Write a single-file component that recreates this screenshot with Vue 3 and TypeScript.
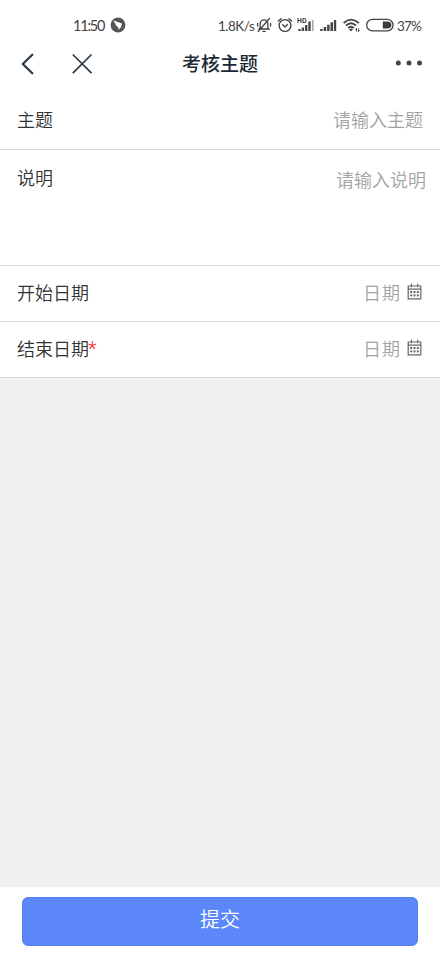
<script setup lang="ts">
import { ref } from 'vue'

interface DateField {
  label: string
  required: boolean
}

const title = ref('考核主题')
const dateFields: DateField[] = [
  { label: '开始日期', required: false },
  { label: '结束日期', required: true },
]
const calendarDots: number[] = [4.2, 7.5, 10.8]
</script>

<template>
  <div class="page">
    <div class="status">
      <span class="time">11:50</span>
      <svg class="bird" width="16" height="16" viewBox="0 0 16 16">
        <circle cx="8" cy="8" r="7.4" fill="#555" />
        <path d="M3.6 3.6 L11.9 6.4 Q12.2 7.5 10.8 9.4 L11.6 9.6 L8.4 13 L8.7 10.8 L7.2 10.5 L8 9.6 Q5.6 8.9 5.2 7.4 L6.4 7.4 Q4.1 6 3.6 3.6Z" fill="#fff" />
      </svg>
      <span class="speed">1.8K/s</span>
      <svg class="bell" width="16" height="16" viewBox="0 0 16 16" fill="none" stroke="#444" stroke-width="1.3" stroke-linecap="round">
        <path d="M3 12 H13 L11.8 10.3 V6.7 C11.8 4.3 10.3 2.8 8 2.8 C5.7 2.8 4.2 4.3 4.2 6.7 V10.3 L3 12 M6.8 14.3 H9.2 M13.5 1.5 L2.2 14.5 M1.6 6.5 V9 M14.6 6.5 V9" />
      </svg>
      <svg class="alarm" width="16" height="16" viewBox="0 0 16 16" fill="none" stroke="#444" stroke-width="1.4" stroke-linecap="round" stroke-linejoin="round">
        <circle cx="8" cy="8.5" r="5.9" />
        <path d="M5.7 7.8 L8 9.9 L10.5 7.5 M1.3 4 L4 1.7 M14.7 4 L12 1.7" />
      </svg>
      <svg class="hd" width="18" height="16" viewBox="0 0 18 16" fill="#444">
        <path d="M1 1 V6 M4 1 V6 M1 3.5 H4 M6 1.5 V5.5 H7.5 Q9 5.5 9 3.5 Q9 1.5 7.5 1.5 H6" fill="none" stroke="#444" stroke-width="1.1" />
        <path d="M1.3 12 h2.4 v2 h-2.4z M4.7 10.4 h2.4 v3.6 h-2.4z M8 8 h2.4 v6 h-2.4z M11.3 4.5 h2.4 v9.5 h-2.4z" />
        <path d="M15 3 h1.6 v11 h-1.6z" fill="#aaa" />
      </svg>
      <svg class="signal" width="17" height="16" viewBox="0 0 17 16" fill="#444">
        <path d="M0.2 12 h2.5 v2 h-2.5z M3.7 10 h2.5 v4 h-2.5z M7.1 7.7 h2.5 v6.3 h-2.5z M10.5 5.3 h2.5 v8.7 h-2.5z M13.9 3 h2.3 v11 h-2.3z" />
      </svg>
      <svg class="wifi" width="18" height="16" viewBox="0 0 18 16" fill="none" stroke="#444" stroke-width="1.8">
        <path d="M0.6 6 Q8 -0.8 15.8 6 M3 8.5 Q8 4 13 8.5 M5.2 11 Q8 8.5 10.8 11" />
        <path d="M8 14.4 L6 12.2 Q8 10.8 10 12.2Z" fill="#444" stroke="none" />
        <path d="M13.5 14.5 V11.5 M12.6 12.5 L13.5 11.4 M15.6 11.5 V14.5 L16.6 13.5" stroke-width="1" />
      </svg>
      <svg class="battery" width="28" height="14" viewBox="0 0 28 14">
        <rect x="0.7" y="1.3" width="26.3" height="11.6" rx="5.6" fill="none" stroke="#444" stroke-width="1.3" />
        <path d="M16.8 3.6 H21.6 Q25.4 4 25.4 7.1 Q25.4 10.2 21.6 10.6 H16.8Z" fill="#3c3c3c" />
      </svg>
      <span class="percent">37%</span>
    </div>

    <header class="nav">
      <svg class="back" width="14" height="22" viewBox="0 0 14 22" fill="none" stroke="#2d3b48" stroke-width="2.3" stroke-linecap="round" stroke-linejoin="round">
        <path d="M11.3 1.7 L1.8 11 L11.3 20.3" />
      </svg>
      <svg class="close" width="20" height="20" viewBox="0 0 20 20" stroke="#2d3b48" stroke-width="1.7" stroke-linecap="round">
        <path d="M1.3 1 L19 18.7 M19 1 L1.3 18.7" />
      </svg>
      <h1>{{ title }}</h1>
      <svg class="more" width="28" height="6" viewBox="0 0 28 6" fill="#3c4650">
        <circle cx="3.3" cy="3" r="2.5" /><circle cx="14" cy="3" r="2.5" /><circle cx="24.5" cy="3" r="2.5" />
      </svg>
    </header>

    <main class="form">
      <div class="row first">
        <span class="label">主题</span>
        <span class="hint">请输入主题</span>
      </div>
      <div class="row description">
        <span class="label">说明</span>
        <span class="hint">请输入说明</span>
      </div>
      <div v-for="field in dateFields" :key="field.label" class="row date">
        <span class="label">{{ field.label }}<span v-if="field.required" class="star">*</span></span>
        <span class="hint">日期</span>
        <svg class="calendar" width="15" height="17" viewBox="0 0 15 17">
          <path d="M1.2 3 H13.8 V15.8 H1.2Z M1.2 6.2 H13.8 M4.4 0.8 V4.2 M10.6 0.8 V4.2" fill="none" stroke="#666" stroke-width="1.2" />
          <g fill="#666">
            <template v-for="x in calendarDots" :key="x">
              <rect :x="x - 1" y="8" width="2" height="2" />
              <rect :x="x - 1" y="11.4" width="2" height="2" />
            </template>
          </g>
        </svg>
      </div>
    </main>

    <footer class="footer">
      <button type="button" class="submit">提交</button>
    </footer>
  </div>
</template>

<style>
body {
  margin: 0;
}
</style>

<style scoped>
.page {
  display: flex;
  flex-direction: column;
  width: 440px;
  height: 953px;
  overflow: hidden;
  background: #f0f0f0;
  font-family: "Noto Sans CJK SC", sans-serif;
}
.status {
  display: flex;
  align-items: center;
  flex: none;
  box-sizing: border-box;
  height: 42px;
  padding: 8px 0 0 73px;
  background: #fff;
  color: #444;
  font-family: Lato, sans-serif;
  font-size: 14px;
  line-height: 20px;
  white-space: nowrap;
}
.status svg {
  flex: none;
}
.time {
  width: 37px;
  padding-top: 1px;
  font-size: 14.5px;
  letter-spacing: -1.2px;
}
.speed {
  width: 38px;
  margin-left: 92px;
  padding-top: 1px;
  font-size: 13.5px;
  letter-spacing: -0.5px;
}
.alarm {
  margin-left: 5px;
}
.hd {
  margin-left: 4px;
}
.signal {
  margin-left: 5px;
}
.wifi {
  margin-left: 6px;
}
.battery {
  margin-left: 5px;
}
.percent {
  margin-left: 3px;
  padding-top: 1px;
  font-size: 13.5px;
  letter-spacing: -0.8px;
}
.nav {
  display: flex;
  align-items: center;
  flex: none;
  height: 43px;
  padding: 0 17px 8px 21px;
  background: #fff;
}
.close {
  margin-left: 37px;
}
h1 {
  margin: 0 0 2px 90px;
  color: #1c2a36;
  font-size: 19px;
  font-weight: 500;
  line-height: 28px;
}
.more {
  margin: 0 0 1px auto;
}
.form {
  flex: 1;
}
.row {
  display: flex;
  align-items: center;
  box-sizing: border-box;
  height: 56px;
  padding: 0 17px 3px;
  border-bottom: 1px solid #d9d9d9;
  background: #fff;
  font-size: 18px;
  line-height: 26px;
}
.row.first {
  height: 57px;
  padding-bottom: 4px;
}
.row.description {
  align-items: flex-start;
  height: 116px;
  padding: 14px 14px 0 17px;
}
.description .hint {
  margin-top: 2px;
}
.label {
  color: #333;
  font-weight: 350;
}
.hint {
  margin-left: auto;
  color: #a3a3a3;
  font-weight: 350;
}
.date .hint {
  letter-spacing: 1px;
}
.star {
  display: inline-block;
  height: 20px;
  margin-left: -1px;
  color: #f22;
  font-family: Roboto, sans-serif;
  font-size: 20px;
  line-height: 20px;
}
.calendar {
  flex: none;
  margin: 0 1px 1px 6px;
}
.footer {
  flex: none;
  box-sizing: border-box;
  height: 66px;
  padding: 10px 22px 7px;
  background: #fff;
}
.submit {
  display: block;
  width: 100%;
  height: 49px;
  padding: 0 0 5px;
  border: 1px solid #5780f0;
  border-radius: 6px;
  background: #5b87fb;
  color: #fff;
  font-family: inherit;
  font-size: 20px;
  font-weight: 350;
  line-height: 28px;
}
</style>
